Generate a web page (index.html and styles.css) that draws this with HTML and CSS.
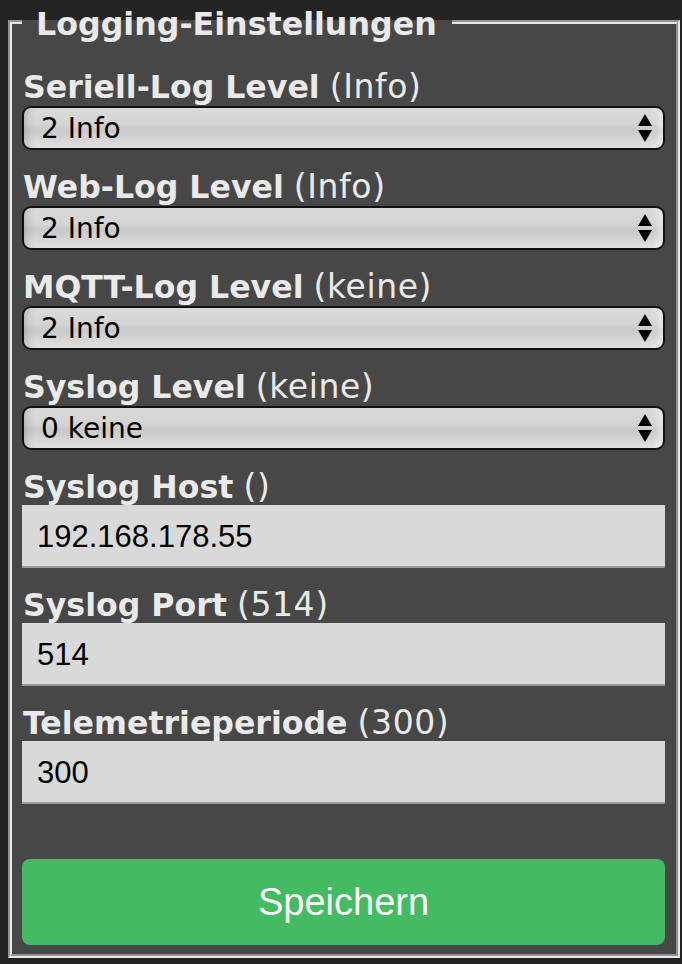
FILE: index.html
```html
<!DOCTYPE html>
<html lang="de">
<head>
<meta charset="utf-8">
<title>Logging-Einstellungen</title>
<link rel="stylesheet" href="styles.css">
</head>
<body>
<div class="page">
  <fieldset class="box">
    <legend class="title">Logging-Einstellungen</legend>
    <form class="form">
      <div class="group">
        <label class="lbl"><b>Seriell-Log Level</b> <span class="def">(Info)</span></label>
        <div class="sel"><select class="select"><option>2 Info</option></select><span class="arrows"></span></div>
      </div>
      <div class="group">
        <label class="lbl"><b>Web-Log Level</b> <span class="def">(Info)</span></label>
        <div class="sel"><select class="select"><option>2 Info</option></select><span class="arrows"></span></div>
      </div>
      <div class="group">
        <label class="lbl"><b>MQTT-Log Level</b> <span class="def">(keine)</span></label>
        <div class="sel"><select class="select"><option>2 Info</option></select><span class="arrows"></span></div>
      </div>
      <div class="group">
        <label class="lbl"><b>Syslog Level</b> <span class="def">(keine)</span></label>
        <div class="sel"><select class="select"><option>0 keine</option></select><span class="arrows"></span></div>
      </div>
      <div class="group">
        <label class="lbl lbl-in"><b>Syslog Host</b> <span class="def">()</span></label>
        <input class="field" type="text" value="192.168.178.55">
      </div>
      <div class="group">
        <label class="lbl lbl-in"><b>Syslog Port</b> <span class="def">(514)</span></label>
        <input class="field" type="text" value="514">
      </div>
      <div class="group">
        <label class="lbl lbl-in"><b>Telemetrieperiode</b> <span class="def">(300)</span></label>
        <input class="field" type="text" value="300">
      </div>
      <button class="save" type="button">Speichern</button>
    </form>
  </fieldset>
</div>
</body>
</html>
```
FILE: styles.css
```css
html, body {
  margin: 0;
  padding: 0;
  background: #232323;
}
.page {
  padding: 2px 2px 0 8px;
}
.box {
  margin: 0;
  width: 672px;
  box-sizing: border-box;
  min-width: 0;
  border: 4px groove #e8e8e8;
  background: #474747;
  padding: 27px 11px 9px 10px;
}
.title {
  font-family: "DejaVu Sans", Verdana, sans-serif;
  font-weight: bold;
  font-size: 31.7px;
  line-height: 36px;
  color: #eaeaea;
  padding: 4px 15px 0 14px;
}
.form {
  display: flex;
  flex-direction: column;
  gap: 19px;
  margin: 0;
}
.group {
  display: flex;
  flex-direction: column;
}
.lbl {
  display: block;
  height: 36px;
  font-family: "DejaVu Sans", Verdana, sans-serif;
  font-size: 31.6px;
  line-height: 36px;
  color: #eaeaea;
  margin: 0 0 1px 1px;
  white-space: nowrap;
}
.lbl b {
  font-weight: bold;
}
.lbl-in {
  margin-bottom: 0;
}
.def {
  font-weight: normal;
  font-size: 33px;
  line-height: 20px;
  letter-spacing: 0.6px;
}
.sel {
  position: relative;
  height: 44px;
}
.select {
  -webkit-appearance: none;
  appearance: none;
  display: block;
  width: 100%;
  height: 44px;
  box-sizing: border-box;
  margin: 0;
  border: 2px solid #111;
  border-radius: 9px;
  padding: 0 40px 0 17px;
  font-family: "DejaVu Sans", Verdana, sans-serif;
  font-size: 28px;
  color: #000;
  background: linear-gradient(to bottom, #dadada 0%, #d4d4d4 40%, #c9c9c9 55%, #d3d3d3 75%, #e2e2e2 100%);
  box-shadow: inset 8px 0 8px -6px rgba(0,0,0,0.18), inset -10px 0 8px -6px rgba(255,255,255,0.5);
  outline: none;
}
.arrows {
  position: absolute;
  right: 13px;
  top: 8px;
  width: 14px;
  height: 28px;
  pointer-events: none;
}
.arrows::before,
.arrows::after {
  content: "";
  position: absolute;
  left: 0;
  width: 0;
  height: 0;
  border-left: 7px solid transparent;
  border-right: 7px solid transparent;
}
.arrows::before {
  top: 0;
  border-bottom: 12px solid #000;
}
.arrows::after {
  bottom: 0;
  border-top: 12px solid #000;
}
.field {
  display: block;
  width: 100%;
  height: 63px;
  box-sizing: border-box;
  margin: 0;
  border: none;
  border-bottom: 2px solid #9a9a9a;
  background: #d9d9d9;
  padding: 2px 15px 0;
  font-family: "Liberation Sans", Arial, sans-serif;
  font-size: 31px;
  color: #000;
  outline: none;
}
.save {
  margin-top: 36px;
  display: block;
  width: 100%;
  height: 86px;
  border: none;
  border-radius: 8px;
  background: #44ba63;
  color: #fafafa;
  font-family: "Liberation Sans", Arial, sans-serif;
  font-size: 38px;
  padding: 0;
}
```
